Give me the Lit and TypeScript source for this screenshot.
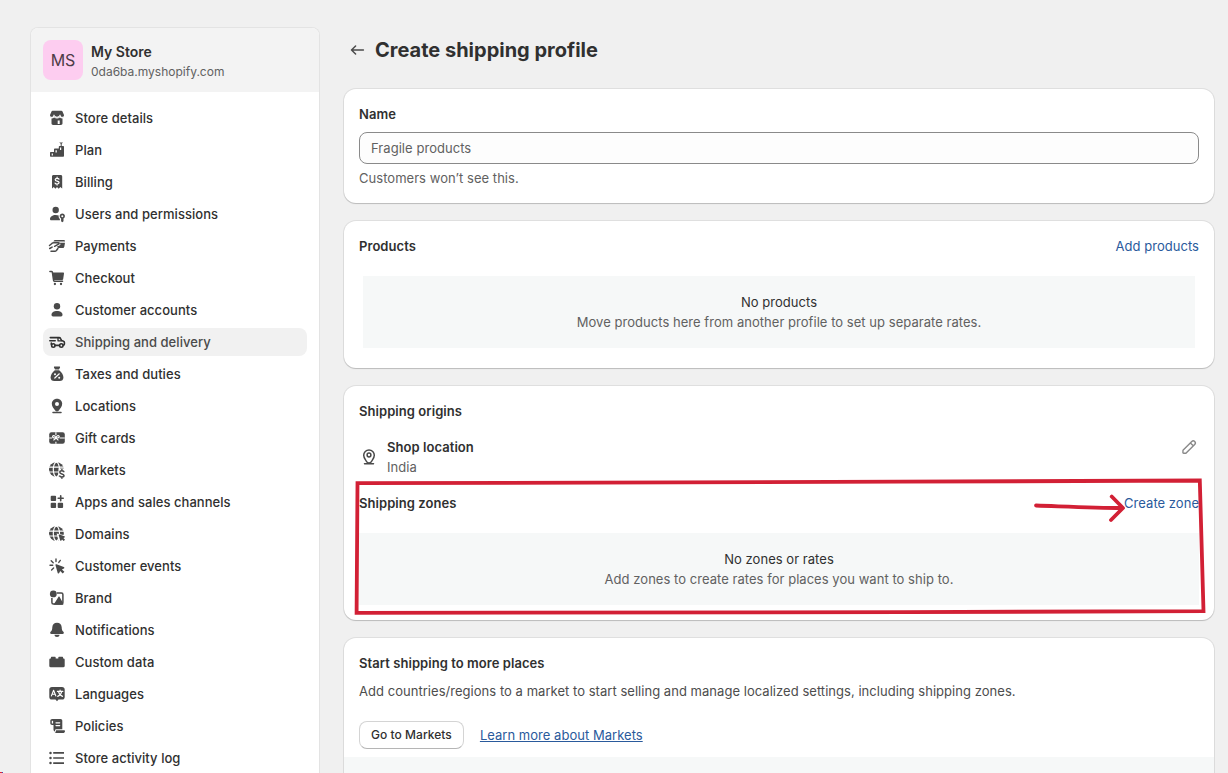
import { LitElement, html, svg, css, TemplateResult } from "lit";
import { customElement } from "lit/decorators.js";
import { classMap } from "lit/directives/class-map.js";

const W = "#fff";

const globe = svg`
  <circle cx="9.4" cy="9.6" r="7.4" />
  <g fill="none" stroke=${W} stroke-width="1.2">
    <ellipse cx="9.4" cy="9.6" rx="3.1" ry="7.4" />
    <path d="M2 7.2h15M2 12h15" />
  </g>`;

const icons: Record<string, TemplateResult> = {
  store: svg`
    <path d="M5.600 2.800h8.800c.5 0 .9.3 1.100.7l1.400 3.200c.4 1.700-.6 3-2 3-.9 0-1.600-.4-2.100-1.100-.6.7-1.500 1.100-2.800 1.100s-2.200-.4-2.800-1.100c-.5.7-1.200 1.100-2.100 1.100-1.400 0-2.400-1.300-2-3l1.400-3.200c.2-.4.6-.7 1.100-.7z" />
    <path d="M4.500 10.600c1.100 0 2-.4 2.700-1 .8.600 1.700.9 2.800.9s2-.3 2.800-.9c.7.600 1.600 1 2.700 1v4.700c0 .9-.7 1.600-1.600 1.600H6.100c-.9 0-1.600-.7-1.600-1.600z" />
    <path fill="none" stroke=${W} stroke-width="1.100" d="M3.300 8.600c1.600 1.600 2.800.9 3.700-1 1.200 2.300 4.800 2.300 6 0 .9 1.900 2.100 2.600 3.700 1" />
    <path fill=${W} d="M10.700 12.500h2v3.400h-2z" />`,
  plan: svg`
    <path d="M3 13c0-.6.4-1 1-1h3V9.500c0-.6.4-1 1-1h3.800V7c0-.6.4-1 1-1h3.200c.6 0 1 .4 1 1v8.800c0 .6-.4 1-1 1H4c-.6 0-1-.4-1-1z" />
    <path d="M12.200 2.500h3.800l-1.300 1.200v2.500h-1V3.700z" />
    <path fill=${W} d="M4.700 13.400h1.200v2H4.700zM8.500 10.200h1.300v2.400H8.500zM13 7.600h1.200v2.400H13z" />`,
  billing: svg`
    <path d="M6.500 3h7.200c.9 0 1.500.6 1.500 1.500v12.100l-1.900-1.500-1.600 1.600-1.700-1.600-1.600 1.600-1.600-1.600L5 16.600V4.500C5 3.600 5.600 3 6.500 3z" />
    <path fill="none" stroke=${W} stroke-width="1.200" stroke-linecap="round" d="M12 7.200c-.4-.6-1.100-.8-1.900-.8-1.100 0-1.900.5-1.900 1.300 0 1.900 3.900.8 3.900 2.900 0 .9-.9 1.400-2 1.400-.9 0-1.600-.3-2-.9M10.100 5.200v1.100M10.100 12.100v1" />`,
  users: svg`
    <circle cx="8.700" cy="6" r="3.200" />
    <path d="M3 14.900c0-2.300 2.500-4 5.700-4 1.100 0 2.200.2 3 .6-.3 1.400.2 2.700 1.200 3.500v1.300H4.300c-.8 0-1.300-.6-1.300-1.400z" />
    <path fill-rule="evenodd" d="M15.300 9.500a2.700 2.700 0 0 1 1.200 5.100v2.600l-1.200 1-1.200-1v-2.600a2.700 2.700 0 0 1 1.200-5.100zm0 1.700a1 1 0 1 0 0 2 1 1 0 0 0 0-2z" />`,
  payments: svg`
    <path d="M8 4h8.600c.8 0 1.400.5 1.400 1.400H6.400C6.900 4.500 7.400 4 8 4z" />
    <path d="M11.900 6.700H18l-.7 4c-.2.900-.8 1.300-1.600 1.300h-4.300l-1.600-1.200 3.100-1.600c1.300-.9.300-2.200-1-2.500z" />
    <path fill="none" stroke="currentColor" stroke-width="1.500" stroke-linecap="round" stroke-linejoin="round" d="M2.500 9.500 5.200 7.200c.5-.4.900-.5 1.500-.5h4.500c1.200 0 1.200 1 .3 1.400L7.600 10.300M4 15.300h3.800c1 0 1.300-.4 1.800-1l1.300-1.800M2.700 12.500l2.400-1.400" />`,
  cart: svg`
    <path fill="none" stroke="currentColor" stroke-width="1.500" stroke-linecap="round" stroke-linejoin="round" d="M2.900 3.500h1.600c.5 0 .8.300.9.800l1.200 8c.1.600.5 1 1.100 1h7.800" />
    <path d="M5.500 4.400h10.600c.6 0 1 .5.900 1.100l-.8 5.400c-.1.700-.7 1.200-1.400 1.200H6.600z" />
    <circle cx="7.900" cy="16" r="1.150" /><circle cx="14" cy="16" r="1.150" />`,
  person: svg`
    <circle cx="10" cy="6.200" r="3.200" />
    <path d="M4.500 14.700c0-2.100 2.400-3.600 5.500-3.600s5.500 1.500 5.500 3.600c0 1-.6 1.700-1.500 1.700H6c-.9 0-1.500-.7-1.500-1.700z" />`,
  truck: svg`
    <g fill="none" stroke="currentColor" stroke-width="1.600" stroke-linecap="round" stroke-linejoin="round">
      <path d="M3.300 5.600h8.700c.8 0 1.300.3 1.600 1l1 2 1.900.6c.6.2.9.6.9 1.200v1.700c0 .6-.3.900-.8 1M2.800 8.700h5.400M4.300 11v1.500M8.200 13.400h4.200" />
      <path stroke-width="1.300" d="M11 5.800v3h3.400" />
      <circle cx="6.300" cy="13.500" r="1.700" /><circle cx="14.300" cy="13.500" r="1.700" />
    </g>`,
  taxes: svg`
    <path d="M7.600 2.500h4.800c.5 0 .8.500.6.900L12 5.400H8L7 3.400c-.2-.4.100-.9.600-.9z" />
    <path d="M7.800 6.200h4.400c2.700 2.200 4.200 4.900 4.200 7.200 0 2.200-1.500 3.600-3.700 3.600H7.300c-2.200 0-3.700-1.400-3.700-3.600 0-2.300 1.500-5 4.200-7.200z" />
    <path stroke=${W} stroke-width="1.200" stroke-linecap="round" d="m7.800 14 4.500-4.200" />
    <circle cx="8" cy="10.300" r="1" fill=${W} /><circle cx="12.200" cy="13.700" r="1" fill=${W} />`,
  pin: svg`
    <path fill-rule="evenodd" d="M10 2.700c3 0 5.200 2.200 5.200 5.100 0 3-2.100 4.600-3.400 6.700-.8 1.200-2.800 1.200-3.600 0C6.900 12.400 4.800 10.800 4.800 7.800c0-2.900 2.200-5.100 5.200-5.100zm0 3.200a2 2 0 1 0 0 4 2 2 0 0 0 0-4z" />
    <path stroke="currentColor" stroke-width="1.500" stroke-linecap="round" d="M6 16.400h8" />`,
  gift: svg`
    <rect x="2.200" y="4.200" width="15.600" height="11.600" rx="2.200" />
    <g fill="none" stroke=${W} stroke-width="1.100">
      <path d="M2.200 10h3M12.600 10h5.200M8.900 4.200v3M8.900 13.800v2M8.900 9.900 6.500 12.400M8.900 9.900l2.500 2.500" />
      <path d="M8.900 9.900c-2.900.2-3.800-.7-3.200-1.800.7-1.100 2.600-.4 3.200 1.800.6-2.200 2.500-2.900 3.200-1.800.6 1.100-.3 2-3.200 1.800z" />
    </g>`,
  markets: svg`${globe}
    <path fill=${W} d="M11.500 8.400h7.500v11h-7.500z" />
    <path fill="none" stroke="currentColor" stroke-width="1.500" stroke-linecap="round" d="M16.800 11.600c-.5-.6-1.200-.8-2-.8-1.100 0-2 .5-2 1.500 0 2.200 4.200 1 4.200 3.200 0 1-.9 1.500-2.100 1.500-.9 0-1.700-.3-2.200-1M14.900 9.600v1.100M14.900 17.200v1" />`,
  apps: svg`
    <rect x="3.700" y="3.800" width="5.400" height="5.300" rx="1" /><rect x="3.700" y="10.800" width="5.400" height="5.300" rx="1" /><rect x="10.700" y="10.800" width="5.400" height="5.300" rx="1" />
    <path stroke="currentColor" stroke-width="1.600" stroke-linecap="round" d="M13.700 3.700v5M11.200 6.200h5" />`,
  domains: svg`${globe}
    <path fill=${W} d="m9.600 9.600 9.400 2v7.500h-7z" />
    <path d="M11.700 11.200c-.2-.5.2-.9.700-.7l5 1.700c.6.200.6.900.1 1.200l-1.100.6 1.600 1.700-1.300 1.300-1.700-1.600-.6 1.100c-.3.500-1 .5-1.200-.1z" />`,
  events: svg`
    <path d="M8.500 9.300c-.2-.6.300-1.200 1-1l7.300 2.600c.7.300.7 1.200.1 1.500l-2 1 2.500 2.400-1.700 1.700-2.500-2.500-1 2c-.3.700-1.300.6-1.500-.1z" />
    <path fill="none" stroke="currentColor" stroke-width="1.400" stroke-linecap="round" d="M9 3v2.600M13.300 4.400l-1.500 2M4.200 4.800l2 1.900M3 9.200h2.700M4.600 14l2-1.900" />`,
  brand: svg`
    <path fill="none" stroke="currentColor" stroke-width="1.500" d="M9.800 5h4.600c.9 0 1.500.6 1.500 1.500v8c0 .9-.6 1.500-1.500 1.500h-8c-.9 0-1.500-.6-1.500-1.500V10" />
    <circle cx="6.300" cy="5.900" r="3.400" />
    <path d="M11.400 8.900c.3-.5.900-.5 1.200 0l3.600 6.300v1.500H6.600z" />`,
  bell: svg`
    <path d="M10 2.800c2.900 0 4.600 1.900 4.700 4.400.1 2.300.4 3.300 1.700 4.600.9 1 .5 2.300-.9 2.300h-11c-1.400 0-1.800-1.300-.9-2.300 1.300-1.300 1.600-2.300 1.700-4.600.1-2.500 1.800-4.400 4.700-4.400z" />
    <path d="M7.500 14.800h5c0 1.300-1.100 2.300-2.500 2.300s-2.500-1-2.500-2.300z" />`,
  data: svg`
    <path d="M3.900 6.600V5.700c0-.6.400-1 1-1h2.800c.6 0 1 .4 1 1v.9h2.600V5.700c0-.6.400-1 1-1h2.800c.6 0 1 .4 1 1v.9h.3c.8 0 1.300.5 1.300 1.300v6.200c0 .7-.5 1.200-1.200 1.200H3.500c-.7 0-1.200-.5-1.200-1.200V7.900c0-.8.500-1.300 1.300-1.300z" />`,
  languages: svg`
    <path d="M5 2.900h10c1.700 0 2.700 1.100 2.700 2.700v7.300c0 1.600-1 2.700-2.700 2.700h-3.500L10 17.200l-1.500-1.600H5c-1.700 0-2.700-1.100-2.700-2.700V5.600c0-1.600 1-2.700 2.700-2.700z" />
    <path fill="none" stroke=${W} stroke-width="1.150" stroke-linecap="round" stroke-linejoin="round" d="m4.400 11.900 2.200-5.600 2.200 5.600M5.200 10.200H8M10.400 7.400h5.400M13.100 6v1.300M14.700 7.500c-.4 2.300-1.800 4-4 4.900M11.500 7.500c.4 2.300 1.800 4 4 4.900" />`,
  policies: svg`
    <path d="M5.200 3h8.300c1.100 0 1.800.8 1.800 1.800v8.400H9.400c-1.100 0-1.400.7-1.400 1.600v.6c-1-.2-1.500-.8-1.500-1.700V9H5.200C4 9 3.300 8.400 3.300 7.300V4.900C3.300 3.700 4.100 3 5.200 3z" />
    <path fill=${W} d="M4.800 4.800h1.300v2.700H4.800z" />
    <path stroke=${W} stroke-width="1.200" stroke-linecap="round" d="M9 6.800h3.700M9 9.600h3.700" />
    <path d="M9.300 14.200h7.900c.5 0 .8.300.8.700 0 1.300-.9 2.200-2.200 2.200H7.600c1-.4 1.200-1.100 1.200-2.300 0-.4.200-.6.500-.6z" />`,
  log: svg`
    <path stroke="currentColor" stroke-width="1.600" d="M6.200 4.900H17M6.200 10H17M6.200 15.100H17" />
    <circle cx="3.500" cy="4.900" r="1.250" /><circle cx="3.500" cy="10" r="1.250" /><circle cx="3.500" cy="15.100" r="1.250" />`,
};

const icon = (name: string) =>
  html`<svg class="icon" viewBox="0 0 20 20" fill="currentColor">${icons[name]}</svg>`;

const navItems: [string, string][] = [
  ["store", "Store details"],
  ["plan", "Plan"],
  ["billing", "Billing"],
  ["users", "Users and permissions"],
  ["payments", "Payments"],
  ["cart", "Checkout"],
  ["person", "Customer accounts"],
  ["truck", "Shipping and delivery"],
  ["taxes", "Taxes and duties"],
  ["pin", "Locations"],
  ["gift", "Gift cards"],
  ["markets", "Markets"],
  ["apps", "Apps and sales channels"],
  ["domains", "Domains"],
  ["events", "Customer events"],
  ["brand", "Brand"],
  ["bell", "Notifications"],
  ["data", "Custom data"],
  ["languages", "Languages"],
  ["policies", "Policies"],
  ["log", "Store activity log"],
];

@customElement("settings-nav")
export class SettingsNav extends LitElement {
  static styles = css`
    :host { display: block; box-sizing: border-box; background: #fff; border: 1px solid #e3e3e3; border-radius: 8px 8px 0 0; border-bottom: 0; overflow: hidden; }
    .store { display: flex; align-items: center; gap: 8px; height: 64px; box-sizing: border-box; padding: 0 12px; background: #f3f3f3; }
    .avatar { display: grid; place-items: center; width: 40px; height: 40px; border-radius: 8px; background: #fdcdf0; color: #4d3c47; font-size: 16px; }
    .names { padding-top: 2px; }
    .name { font-size: 14px; line-height: 20px; font-weight: 600; color: #303030; }
    .domain { font-size: 12px; line-height: 19px; color: #616161; }
    .list { display: flex; flex-direction: column; gap: 4px; padding: 12px; }
    .item { display: flex; align-items: center; gap: 8px; height: 28px; padding: 0 4px; border-radius: 8px; font-size: 13px; font-weight: 500; color: #303030; letter-spacing: 0.05px; white-space: nowrap; }
    .active { background: #f1f1f1; color: #4a4a4a; }
    .icon { width: 20px; height: 20px; flex: none; color: #4a4a4a; }
    .active .icon { color: #303030; }
  `;
  render() {
    return html`
      <div class="store">
        <div class="avatar">MS</div>
        <div class="names"><div class="name">My Store</div><div class="domain">0da6ba.myshopify.com</div></div>
      </div>
      <nav class="list">
        ${navItems.map(([name, label]) => html`
          <div class=${classMap({ item: true, active: name === "truck" })}>${icon(name)}<span>${label}</span></div>`)}
      </nav>`;
  }
}

@customElement("app-root")
export class AppRoot extends LitElement {
  static styles = css`
    :host { display: block; position: relative; height: 773px; overflow: hidden; background: #f0f0f0; font-family: Inter, "Liberation Sans", sans-serif; font-size: 13px; line-height: 20px; color: #303030; }
    .page { display: grid; grid-template-columns: 290px 870px; column-gap: 24px; padding-left: 30px; }
    .side { margin-top: 27px; }
    .main { display: flex; flex-direction: column; padding-top: 36px; }
    .head { display: flex; align-items: center; gap: 7px; height: 28px; margin: 0 0 25px 4px; }
    .title { margin: 0; font-size: 20px; line-height: 28px; font-weight: 650; color: #303030; }
    .cards { display: flex; flex-direction: column; gap: 18px; }
    .card { box-sizing: border-box; background: #fff; border-radius: 12px; padding: 15px; box-shadow: 0 1px 1px rgba(0,0,0,.16), 0 0 0 1px rgba(0,0,0,.07); overflow: hidden; }
    .h { margin: 0; font-size: 13px; line-height: 20px; font-weight: 600; letter-spacing: .06px; }
    .name-card { height: 114px; }
    .products { height: 147px; }
    .origins { height: 234px; }
    .more { height: 160px; display: flex; flex-direction: column; }
    .input { box-sizing: border-box; display: block; width: 100%; height: 32px; margin: 8px 0 4px; padding: 0 11px; border: 1px solid #8a8a8a; border-radius: 8px; background: #fdfdfd; font: inherit; letter-spacing: .05px; outline: none; }
    .input::placeholder { color: #616161; opacity: 1; }
    .text { letter-spacing: .036px; white-space: nowrap; }
    .muted { color: #616161; }
    .row { display: flex; justify-content: space-between; align-items: center; }
    .link { color: #2a5a9c; letter-spacing: .03px; }
    .under { text-decoration: underline; }
    .empty { display: flex; flex-direction: column; align-items: center; justify-content: center; height: 72px; background: #f6f8f8; margin-top: 20px; letter-spacing: .04px; }
    .inset { margin-left: 4px; margin-right: 4px; }
    .place { display: flex; align-items: center; margin-top: 16px; gap: 8px; }
    .grow { flex: 1; }
    .icon { width: 20px; height: 20px; flex: none; color: #4a4a4a; }
    .pencil { align-self: flex-start; color: #8a8a8a; }
    .zones { margin-top: 16px; }
    .copy { margin-top: 8px; color: #4d4d4d; }
    .actions { display: flex; align-items: center; gap: 16px; margin-top: 20px; }
    .btn { box-sizing: border-box; height: 28px; padding: 0 11px; border: 1px solid #d4d4d4; border-bottom-color: #b5b5b5; border-radius: 8px; background: #fff; font: 500 12px/24px Inter, sans-serif; color: #303030; letter-spacing: .04px; }
    .foot { flex: 1; margin: 8px -15px -15px; background: #f6f8f8; }
    .marks { position: absolute; left: 0; top: 0; width: 1228px; height: 773px; pointer-events: none; }
  `;
  render() {
    return html`
      <div class="page">
        <settings-nav class="side"></settings-nav>
        <main class="main">
          <div class="head">
            <svg class="icon" viewBox="0 0 20 20" fill="none" stroke="currentColor" stroke-width="1.5" stroke-linecap="round" stroke-linejoin="round"><path d="M15.400 10H3.500M7.600 6 3.500 10 7.600 14" /></svg>
            <h1 class="title">Create shipping profile</h1>
          </div>
          <div class="cards">
            <section class="card name-card">
              <h2 class="h">Name</h2>
              <input class="input" placeholder="Fragile products" />
              <div class="text muted">Customers won’t see this.</div>
            </section>
            <section class="card products">
              <div class="row"><h2 class="h">Products</h2><a class="link">Add products</a></div>
              <div class="empty inset"><div>No products</div><div class="muted">Move products here from another profile to set up separate rates.</div></div>
            </section>
            <section class="card origins">
              <h2 class="h">Shipping origins</h2>
              <div class="place">
                <svg class="icon" viewBox="0 0 20 20" fill="none" stroke="currentColor" stroke-width="1.5" stroke-linecap="round" stroke-linejoin="round"><path d="M7.600 14.700C6.400 12.600 4.700 10.900 4.700 8.200a5.300 5.300 0 0 1 10.600 0c0 2.700-1.700 4.400-2.900 6.500M5.500 16.700h9M7.600 14.700c1 1.600 3.800 1.600 4.800 0" /><circle cx="10" cy="8" r="1.900" /></svg>
                <div class="grow"><h3 class="h">Shop location</h3><div class="text muted">India</div></div>
                <svg class="icon pencil" viewBox="0 0 20 20" fill="none" stroke="currentColor" stroke-width="1.400" stroke-linejoin="round"><path d="m4 13.300 8.800-8.800a2.050 2.050 0 0 1 2.900 2.900L6.900 16.200H4.600c-.4 0-.7-.3-.7-.7zM11.400 5.900l2.900 2.900" /></svg>
              </div>
              <div class="row zones"><h2 class="h">Shipping zones</h2><a class="link">Create zone</a></div>
              <div class="empty"><div>No zones or rates</div><div class="muted">Add zones to create rates for places you want to ship to.</div></div>
            </section>
            <section class="card more">
              <h2 class="h">Start shipping to more places</h2>
              <div class="text copy">Add countries/regions to a market to start selling and manage localized settings, including shipping zones.</div>
              <div class="actions"><button class="btn">Go to Markets</button><a class="link under">Learn more about Markets</a></div>
              <div class="foot"></div>
            </section>
          </div>
        </main>
      </div>
      <svg class="marks" viewBox="0 0 1228 773" fill="none" stroke="#d22035" stroke-width="3.800" stroke-linejoin="round" stroke-linecap="round">
        <path stroke-linejoin="miter" d="M357.500 483.200 900 481.700 1199.800 480.500l3.700 130.700-300 .9-546.900.8z" />
        <path d="M1036 505.500c30 1 58 2.300 86.500 2.500M1111.700 496.500l11.300 11.500-12 12" />
        <path stroke="none" fill="#e0263c" d="M0 772h2v1H0z" /><path stroke="none" fill="#3a4fb0" d="M2 772h1v1H2z" />
      </svg>`;
  }
}
